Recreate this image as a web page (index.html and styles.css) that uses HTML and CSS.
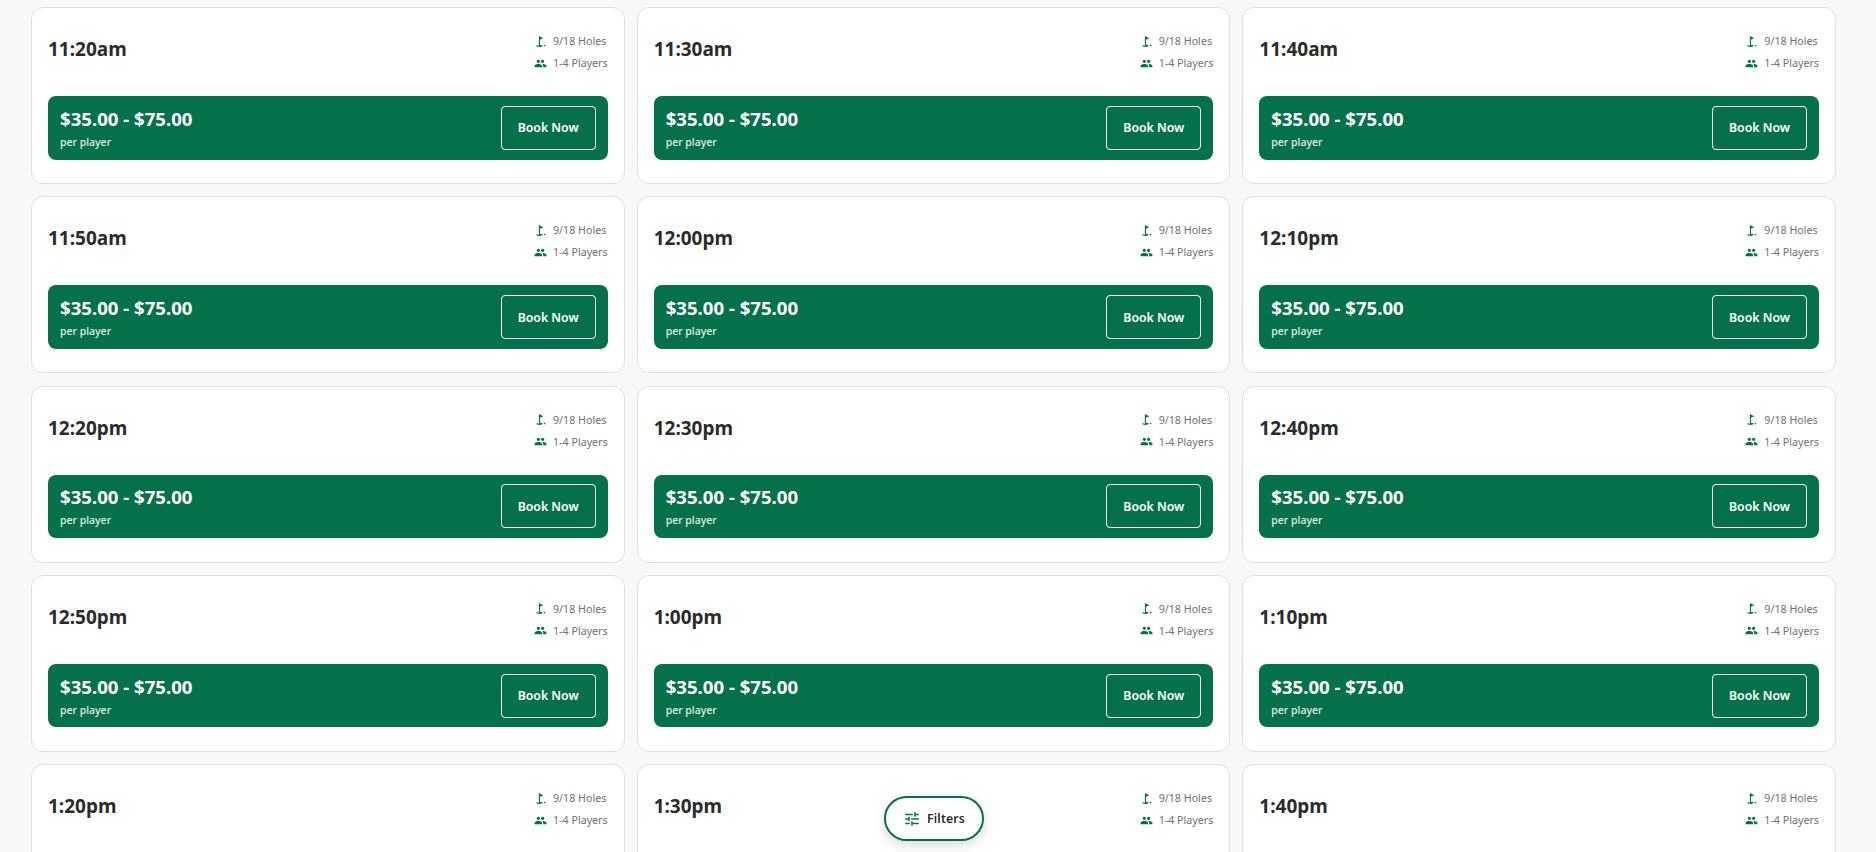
FILE: index.html
```html
<!DOCTYPE html>
<html lang="en">
<head>
    <meta charset="UTF-8">
    <meta name="viewport" content="width=device-width, initial-scale=1.0">
    <title>Tee Times</title>
    <link rel="stylesheet" href="styles.css">
</head>
<body>
    <svg class="icon-defs" aria-hidden="true">
        <symbol id="icon-golf" viewBox="0 0 24 24">
            <circle cx="19.5" cy="19.5" r="1.5"/>
            <path d="M17 5.92L9 2v18H7v-1.73c-1.79.35-3 .99-3 1.73 0 1.1 2.69 2 6 2s6-.9 6-2c0-.99-2.16-1.81-5-1.97V8.98l6-3.06z"/>
        </symbol>
        <symbol id="icon-group" viewBox="0 0 24 24">
            <path d="M16 11c1.66 0 2.99-1.34 2.99-3S17.66 5 16 5c-1.66 0-3 1.34-3 3s1.34 3 3 3zm-8 0c1.66 0 2.99-1.34 2.99-3S9.66 5 8 5C6.34 5 5 6.34 5 8s1.34 3 3 3zm0 2c-2.33 0-7 1.17-7 3.5V19h14v-2.5c0-2.33-4.67-3.5-7-3.5zm8 0c-.29 0-.62.02-.97.05 1.16.84 1.97 1.97 1.97 3.45V19h6v-2.5c0-2.33-4.67-3.5-7-3.5z"/>
        </symbol>
    </svg>

    <div class="grid">
        <div class="card">
            <div class="card-top">
                <div class="time">11:20am</div>
                <div class="meta">
                    <div class="meta-row"><svg class="meta-icon"><use href="#icon-golf"/></svg>9/18 Holes</div>
                    <div class="meta-row"><svg class="meta-icon"><use href="#icon-group"/></svg>1-4 Players</div>
                </div>
            </div>
            <div class="price-bar">
                <div>
                    <div class="price">$35.00 - $75.00</div>
                    <div class="per">per player</div>
                </div>
                <button class="book">Book Now</button>
            </div>
        </div>
        <div class="card">
            <div class="card-top">
                <div class="time">11:30am</div>
                <div class="meta">
                    <div class="meta-row"><svg class="meta-icon"><use href="#icon-golf"/></svg>9/18 Holes</div>
                    <div class="meta-row"><svg class="meta-icon"><use href="#icon-group"/></svg>1-4 Players</div>
                </div>
            </div>
            <div class="price-bar">
                <div>
                    <div class="price">$35.00 - $75.00</div>
                    <div class="per">per player</div>
                </div>
                <button class="book">Book Now</button>
            </div>
        </div>
        <div class="card">
            <div class="card-top">
                <div class="time">11:40am</div>
                <div class="meta">
                    <div class="meta-row"><svg class="meta-icon"><use href="#icon-golf"/></svg>9/18 Holes</div>
                    <div class="meta-row"><svg class="meta-icon"><use href="#icon-group"/></svg>1-4 Players</div>
                </div>
            </div>
            <div class="price-bar">
                <div>
                    <div class="price">$35.00 - $75.00</div>
                    <div class="per">per player</div>
                </div>
                <button class="book">Book Now</button>
            </div>
        </div>
        <div class="card">
            <div class="card-top">
                <div class="time">11:50am</div>
                <div class="meta">
                    <div class="meta-row"><svg class="meta-icon"><use href="#icon-golf"/></svg>9/18 Holes</div>
                    <div class="meta-row"><svg class="meta-icon"><use href="#icon-group"/></svg>1-4 Players</div>
                </div>
            </div>
            <div class="price-bar">
                <div>
                    <div class="price">$35.00 - $75.00</div>
                    <div class="per">per player</div>
                </div>
                <button class="book">Book Now</button>
            </div>
        </div>
        <div class="card">
            <div class="card-top">
                <div class="time">12:00pm</div>
                <div class="meta">
                    <div class="meta-row"><svg class="meta-icon"><use href="#icon-golf"/></svg>9/18 Holes</div>
                    <div class="meta-row"><svg class="meta-icon"><use href="#icon-group"/></svg>1-4 Players</div>
                </div>
            </div>
            <div class="price-bar">
                <div>
                    <div class="price">$35.00 - $75.00</div>
                    <div class="per">per player</div>
                </div>
                <button class="book">Book Now</button>
            </div>
        </div>
        <div class="card">
            <div class="card-top">
                <div class="time">12:10pm</div>
                <div class="meta">
                    <div class="meta-row"><svg class="meta-icon"><use href="#icon-golf"/></svg>9/18 Holes</div>
                    <div class="meta-row"><svg class="meta-icon"><use href="#icon-group"/></svg>1-4 Players</div>
                </div>
            </div>
            <div class="price-bar">
                <div>
                    <div class="price">$35.00 - $75.00</div>
                    <div class="per">per player</div>
                </div>
                <button class="book">Book Now</button>
            </div>
        </div>
        <div class="card">
            <div class="card-top">
                <div class="time">12:20pm</div>
                <div class="meta">
                    <div class="meta-row"><svg class="meta-icon"><use href="#icon-golf"/></svg>9/18 Holes</div>
                    <div class="meta-row"><svg class="meta-icon"><use href="#icon-group"/></svg>1-4 Players</div>
                </div>
            </div>
            <div class="price-bar">
                <div>
                    <div class="price">$35.00 - $75.00</div>
                    <div class="per">per player</div>
                </div>
                <button class="book">Book Now</button>
            </div>
        </div>
        <div class="card">
            <div class="card-top">
                <div class="time">12:30pm</div>
                <div class="meta">
                    <div class="meta-row"><svg class="meta-icon"><use href="#icon-golf"/></svg>9/18 Holes</div>
                    <div class="meta-row"><svg class="meta-icon"><use href="#icon-group"/></svg>1-4 Players</div>
                </div>
            </div>
            <div class="price-bar">
                <div>
                    <div class="price">$35.00 - $75.00</div>
                    <div class="per">per player</div>
                </div>
                <button class="book">Book Now</button>
            </div>
        </div>
        <div class="card">
            <div class="card-top">
                <div class="time">12:40pm</div>
                <div class="meta">
                    <div class="meta-row"><svg class="meta-icon"><use href="#icon-golf"/></svg>9/18 Holes</div>
                    <div class="meta-row"><svg class="meta-icon"><use href="#icon-group"/></svg>1-4 Players</div>
                </div>
            </div>
            <div class="price-bar">
                <div>
                    <div class="price">$35.00 - $75.00</div>
                    <div class="per">per player</div>
                </div>
                <button class="book">Book Now</button>
            </div>
        </div>
        <div class="card">
            <div class="card-top">
                <div class="time">12:50pm</div>
                <div class="meta">
                    <div class="meta-row"><svg class="meta-icon"><use href="#icon-golf"/></svg>9/18 Holes</div>
                    <div class="meta-row"><svg class="meta-icon"><use href="#icon-group"/></svg>1-4 Players</div>
                </div>
            </div>
            <div class="price-bar">
                <div>
                    <div class="price">$35.00 - $75.00</div>
                    <div class="per">per player</div>
                </div>
                <button class="book">Book Now</button>
            </div>
        </div>
        <div class="card">
            <div class="card-top">
                <div class="time">1:00pm</div>
                <div class="meta">
                    <div class="meta-row"><svg class="meta-icon"><use href="#icon-golf"/></svg>9/18 Holes</div>
                    <div class="meta-row"><svg class="meta-icon"><use href="#icon-group"/></svg>1-4 Players</div>
                </div>
            </div>
            <div class="price-bar">
                <div>
                    <div class="price">$35.00 - $75.00</div>
                    <div class="per">per player</div>
                </div>
                <button class="book">Book Now</button>
            </div>
        </div>
        <div class="card">
            <div class="card-top">
                <div class="time">1:10pm</div>
                <div class="meta">
                    <div class="meta-row"><svg class="meta-icon"><use href="#icon-golf"/></svg>9/18 Holes</div>
                    <div class="meta-row"><svg class="meta-icon"><use href="#icon-group"/></svg>1-4 Players</div>
                </div>
            </div>
            <div class="price-bar">
                <div>
                    <div class="price">$35.00 - $75.00</div>
                    <div class="per">per player</div>
                </div>
                <button class="book">Book Now</button>
            </div>
        </div>
        <div class="card">
            <div class="card-top">
                <div class="time">1:20pm</div>
                <div class="meta">
                    <div class="meta-row"><svg class="meta-icon"><use href="#icon-golf"/></svg>9/18 Holes</div>
                    <div class="meta-row"><svg class="meta-icon"><use href="#icon-group"/></svg>1-4 Players</div>
                </div>
            </div>
            <div class="price-bar">
                <div>
                    <div class="price">$35.00 - $75.00</div>
                    <div class="per">per player</div>
                </div>
                <button class="book">Book Now</button>
            </div>
        </div>
        <div class="card">
            <div class="card-top">
                <div class="time">1:30pm</div>
                <div class="meta">
                    <div class="meta-row"><svg class="meta-icon"><use href="#icon-golf"/></svg>9/18 Holes</div>
                    <div class="meta-row"><svg class="meta-icon"><use href="#icon-group"/></svg>1-4 Players</div>
                </div>
            </div>
            <div class="price-bar">
                <div>
                    <div class="price">$35.00 - $75.00</div>
                    <div class="per">per player</div>
                </div>
                <button class="book">Book Now</button>
            </div>
        </div>
        <div class="card">
            <div class="card-top">
                <div class="time">1:40pm</div>
                <div class="meta">
                    <div class="meta-row"><svg class="meta-icon"><use href="#icon-golf"/></svg>9/18 Holes</div>
                    <div class="meta-row"><svg class="meta-icon"><use href="#icon-group"/></svg>1-4 Players</div>
                </div>
            </div>
            <div class="price-bar">
                <div>
                    <div class="price">$35.00 - $75.00</div>
                    <div class="per">per player</div>
                </div>
                <button class="book">Book Now</button>
            </div>
        </div>
    </div>

    <button class="filters">
        <svg class="filters-icon" viewBox="0 0 24 24"><path d="M3 17v2h6v-2H3zM3 5v2h10V5H3zm10 16v-2h8v-2h-8v-2h-2v6h2zM7 9v2H3v2h4v2h2V9H7zm14 4v-2H11v2h10zm-6-4h2V7h4V5h-4V3h-2v6z"/></svg>
        Filters
    </button>
</body>
</html>
```

FILE: styles.css
```css
html, body {
    height: 100%;
}
body {
    margin: 0;
    overflow: hidden;
    background-color: #f8f8f8;
    color: #2b2b2b;
    font-family: "Noto Sans", "Open Sans", sans-serif;
}
.icon-defs {
    display: none;
}
.grid {
    display: grid;
    grid-template-columns: repeat(3, 1fr);
    gap: 12.3px 12px;
    padding: 7px 40px 0 31px;
}
.card {
    background-color: #fff;
    border: 1px solid #e0e0e0;
    border-radius: 12px;
    height: 177px;
    box-sizing: border-box;
    padding: 0 16px;
}
.card-top {
    display: flex;
    justify-content: space-between;
    align-items: center;
    height: 88px;
}
.time {
    font-size: 19px;
    font-weight: 700;
    margin-bottom: 6px;
}
.meta {
    display: flex;
    flex-direction: column;
    gap: 6px;
}
.meta-row {
    display: flex;
    align-items: center;
    gap: 6px;
    height: 16px;
    font-size: 10.7px;
    color: #707070;
}
.meta-icon {
    width: 13px;
    height: 13px;
    fill: #05714a;
}
.price-bar {
    display: flex;
    justify-content: space-between;
    align-items: center;
    height: 63.5px;
    box-sizing: border-box;
    padding: 0 12px;
    background-color: #05714a;
    border-radius: 8px;
    color: #fff;
}
.price {
    font-size: 18.6px;
    font-weight: 700;
    line-height: 24px;
    margin-top: 1px;
}
.per {
    font-size: 10.5px;
    font-weight: 500;
    line-height: 16px;
    margin-top: 3px;
    color: #e3efe9;
}
.book {
    width: 95px;
    height: 44px;
    padding: 0;
    background: none;
    border: 1px solid #fff;
    border-radius: 4px;
    color: #fff;
    font-family: inherit;
    font-size: 12.3px;
    font-weight: 600;
    cursor: pointer;
}
.filters {
    position: fixed;
    left: 884px;
    top: 796px;
    display: flex;
    align-items: center;
    justify-content: center;
    gap: 6px;
    width: 100px;
    height: 45px;
    background-color: #fff;
    border: 2px solid #05714a;
    border-radius: 23px;
    box-shadow: 0 4px 12px rgba(0, 0, 0, 0.15);
    color: #2b2b2b;
    font-family: inherit;
    font-size: 12.5px;
    font-weight: 600;
    cursor: pointer;
}
.filters-icon {
    width: 18px;
    height: 18px;
    fill: #05714a;
}
```
